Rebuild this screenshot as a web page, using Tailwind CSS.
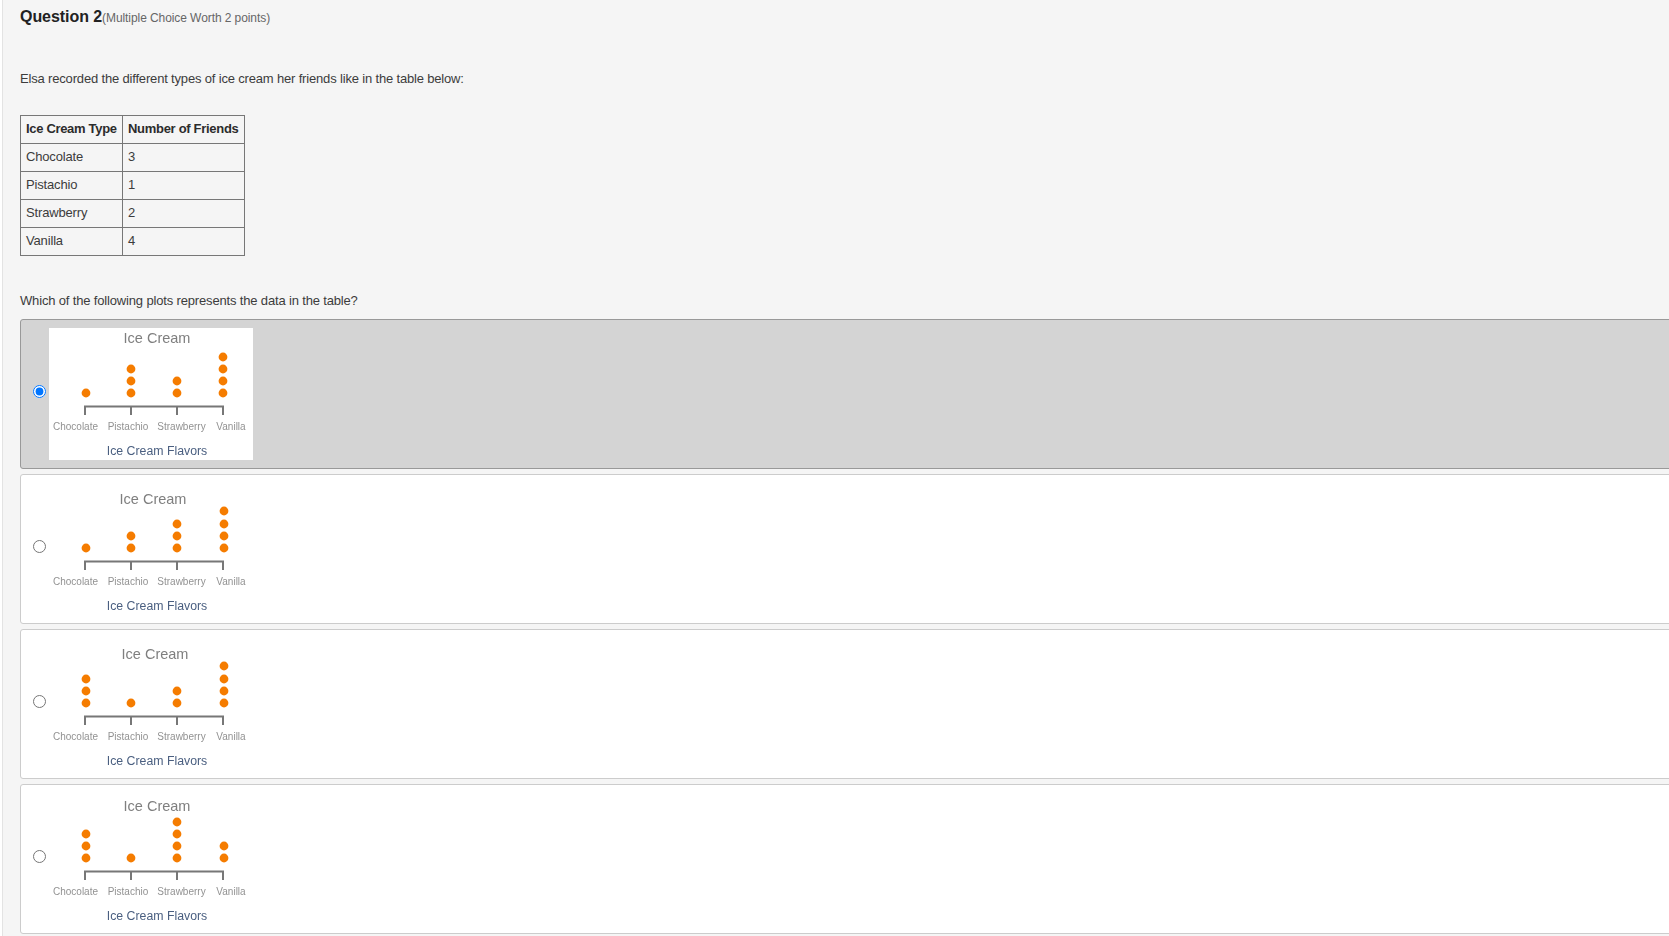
<!DOCTYPE html>
<html lang="en">
<head>
  <meta charset="UTF-8" />
  <title>Question 2</title>
  <script src="https://cdn.jsdelivr.net/npm/@tailwindcss/browser@4"></script>
</head>
<body class="h-[936px] overflow-hidden bg-white font-['Liberation_Sans',Arial,sans-serif] text-[#3c3c3c]">
  <main class="ml-[2px] h-full border-l border-[#e3e3e3] bg-[#f5f5f5] pl-[17px] pt-[5px] w-[1700px]">
    <h2 class="flex items-baseline h-[22px] text-[16px] font-bold tracking-[-0.06px] text-[#222]">Question 2<span class="text-[12px] font-normal tracking-[-0.08px] text-[#666]">(Multiple Choice Worth 2 points)</span></h2>

    <p class="mt-[42px] h-[20px] text-[13px] leading-[20px] tracking-[-0.17px]">Elsa recorded the different types of ice cream her friends like in the table below:</p>

    <table class="mt-[26px] border-collapse bg-[#f5f5f5] text-[13px] leading-[20px] tracking-[-0.16px]">
      <tr class="h-[28px]">
        <th class="w-[102px] whitespace-nowrap border border-[#777] px-[5px] pb-[2px] text-left font-bold tracking-[-0.32px] text-[#2c2c2c]">Ice Cream Type</th>
        <th class="w-[122px] whitespace-nowrap border border-[#777] px-[5px] pb-[2px] text-left font-bold tracking-[-0.3px] text-[#2c2c2c]">Number of Friends</th>
      </tr>
      <tr class="h-[28px]"><td class="border border-[#777] px-[5px] pb-[2px]">Chocolate</td><td class="border border-[#777] px-[5px] pb-[2px]">3</td></tr>
      <tr class="h-[28px]"><td class="border border-[#777] px-[5px] pb-[2px]">Pistachio</td><td class="border border-[#777] px-[5px] pb-[2px]">1</td></tr>
      <tr class="h-[28px]"><td class="border border-[#777] px-[5px] pb-[2px]">Strawberry</td><td class="border border-[#777] px-[5px] pb-[2px]">2</td></tr>
      <tr class="h-[28px]"><td class="border border-[#777] px-[5px] pb-[2px]">Vanilla</td><td class="border border-[#777] px-[5px] pb-[2px]">4</td></tr>
    </table>

    <p class="mt-[35px] h-[20px] text-[13px] leading-[20px] tracking-[-0.16px]">Which of the following plots represents the data in the table?</p>

    <div class="mt-[8px] flex flex-col gap-[5px]">
      <!-- selected answer -->
      <label class="flex h-[150px] items-center rounded-[3px] border border-[#999] bg-[#d4d4d4] pl-[12px]">
        <input type="radio" name="answer" checked class="mb-[5px] h-[13px] w-[13px] accent-[#0075ff]" />
        <svg class="ml-[3px] mb-[1px] bg-white blur-[0.3px]" width="204" height="132" viewBox="0 0 204 132" font-family="Liberation Sans, Arial, sans-serif" text-anchor="middle">
          <text x="108" y="14.500" font-size="14.500" fill="#7f7f7f">Ice Cream</text>
          <g fill="#f57c00">
            <circle cx="37" cy="65" r="4.400" />
            <circle cx="82" cy="65" r="4.400" /><circle cx="82" cy="53" r="4.400" /><circle cx="82" cy="41" r="4.400" />
            <circle cx="128" cy="65" r="4.400" /><circle cx="128" cy="53" r="4.400" />
            <circle cx="174" cy="65" r="4.400" /><circle cx="174" cy="53" r="4.400" /><circle cx="174" cy="41" r="4.400" /><circle cx="174" cy="29" r="4.400" />
          </g>
          <path d="M36 87V78.500H174V87M82 78.500V87M128 78.500V87" fill="none" stroke="#777" stroke-width="2" />
          <g font-size="10" fill="#929292">
            <text x="26.500" y="102">Chocolate</text><text x="79" y="102">Pistachio</text><text x="132.500" y="102">Strawberry</text><text x="182" y="102">Vanilla</text>
          </g>
          <text x="108" y="126.500" font-size="12.300" fill="#4a5f80">Ice Cream Flavors</text>
        </svg>
      </label>

      <label class="flex h-[150px] items-center rounded-[3px] border border-[#ccc] bg-white pl-[12px]">
        <input type="radio" name="answer" class="mb-[5px] h-[13px] w-[13px] accent-[#0075ff]" />
        <svg class="ml-[3px] mb-[1px] blur-[0.3px]" width="204" height="132" viewBox="0 0 204 132" font-family="Liberation Sans, Arial, sans-serif" text-anchor="middle">
          <text x="104" y="20.500" font-size="14.500" fill="#7f7f7f">Ice Cream</text>
          <g fill="#f57c00">
            <circle cx="37" cy="65" r="4.400" />
            <circle cx="82" cy="65" r="4.400" /><circle cx="82" cy="53" r="4.400" />
            <circle cx="128" cy="65" r="4.400" /><circle cx="128" cy="53" r="4.400" /><circle cx="128" cy="41" r="4.400" />
            <circle cx="175" cy="65" r="4.400" /><circle cx="175" cy="53" r="4.400" /><circle cx="175" cy="41" r="4.400" /><circle cx="175" cy="28" r="4.400" />
          </g>
          <path d="M36 87V78.500H174V87M82 78.500V87M128 78.500V87" fill="none" stroke="#777" stroke-width="2" />
          <g font-size="10" fill="#929292">
            <text x="26.500" y="102">Chocolate</text><text x="79" y="102">Pistachio</text><text x="132.500" y="102">Strawberry</text><text x="182" y="102">Vanilla</text>
          </g>
          <text x="108" y="126.500" font-size="12.300" fill="#4a5f80">Ice Cream Flavors</text>
        </svg>
      </label>

      <label class="flex h-[150px] items-center rounded-[3px] border border-[#ccc] bg-white pl-[12px]">
        <input type="radio" name="answer" class="mb-[5px] h-[13px] w-[13px] accent-[#0075ff]" />
        <svg class="ml-[3px] mb-[1px] blur-[0.3px]" width="204" height="132" viewBox="0 0 204 132" font-family="Liberation Sans, Arial, sans-serif" text-anchor="middle">
          <text x="106" y="20.500" font-size="14.500" fill="#7f7f7f">Ice Cream</text>
          <g fill="#f57c00">
            <circle cx="37" cy="65" r="4.400" /><circle cx="37" cy="53" r="4.400" /><circle cx="37" cy="41" r="4.400" />
            <circle cx="82" cy="65" r="4.400" />
            <circle cx="128" cy="65" r="4.400" /><circle cx="128" cy="53" r="4.400" />
            <circle cx="175" cy="65" r="4.400" /><circle cx="175" cy="53" r="4.400" /><circle cx="175" cy="41" r="4.400" /><circle cx="175" cy="28" r="4.400" />
          </g>
          <path d="M36 87V78.500H174V87M82 78.500V87M128 78.500V87" fill="none" stroke="#777" stroke-width="2" />
          <g font-size="10" fill="#929292">
            <text x="26.500" y="102">Chocolate</text><text x="79" y="102">Pistachio</text><text x="132.500" y="102">Strawberry</text><text x="182" y="102">Vanilla</text>
          </g>
          <text x="108" y="126.500" font-size="12.300" fill="#4a5f80">Ice Cream Flavors</text>
        </svg>
      </label>

      <label class="flex h-[150px] items-center rounded-[3px] border border-[#ccc] bg-white pl-[12px]">
        <input type="radio" name="answer" class="mb-[5px] h-[13px] w-[13px] accent-[#0075ff]" />
        <svg class="ml-[3px] mb-[1px] blur-[0.3px]" width="204" height="132" viewBox="0 0 204 132" font-family="Liberation Sans, Arial, sans-serif" text-anchor="middle">
          <text x="108" y="17.500" font-size="14.500" fill="#7f7f7f">Ice Cream</text>
          <g fill="#f57c00">
            <circle cx="37" cy="65" r="4.400" /><circle cx="37" cy="53" r="4.400" /><circle cx="37" cy="41" r="4.400" />
            <circle cx="82" cy="65" r="4.400" />
            <circle cx="128" cy="65" r="4.400" /><circle cx="128" cy="53" r="4.400" /><circle cx="128" cy="41" r="4.400" /><circle cx="128" cy="29" r="4.400" />
            <circle cx="175" cy="65" r="4.400" /><circle cx="175" cy="53" r="4.400" />
          </g>
          <path d="M36 87V78.500H174V87M82 78.500V87M128 78.500V87" fill="none" stroke="#777" stroke-width="2" />
          <g font-size="10" fill="#929292">
            <text x="26.500" y="102">Chocolate</text><text x="79" y="102">Pistachio</text><text x="132.500" y="102">Strawberry</text><text x="182" y="102">Vanilla</text>
          </g>
          <text x="108" y="126.500" font-size="12.300" fill="#4a5f80">Ice Cream Flavors</text>
        </svg>
      </label>
    </div>
  </main>
</body>
</html>
